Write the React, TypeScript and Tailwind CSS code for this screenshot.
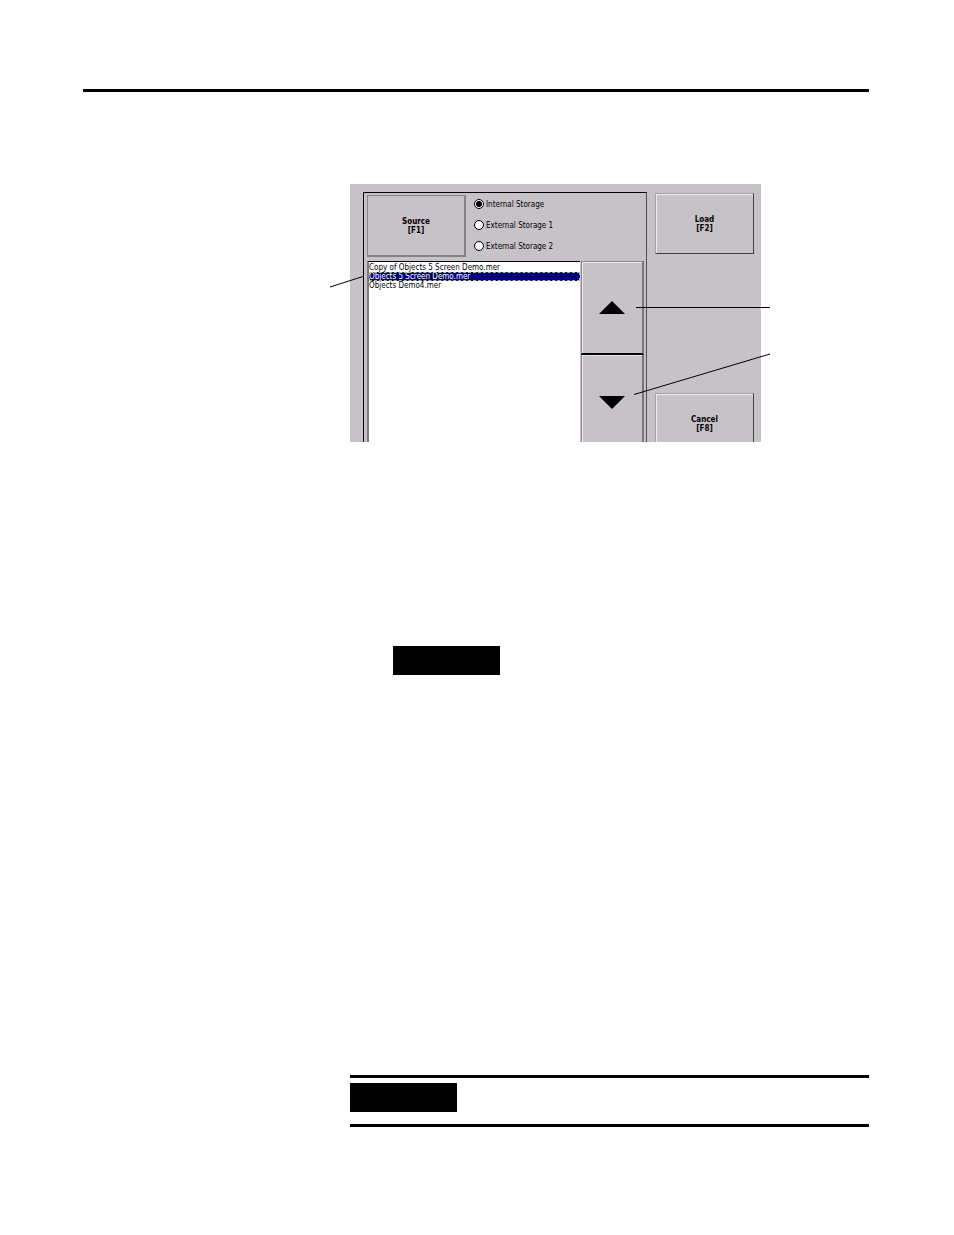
import { useState } from "react";

const files = ["Copy of Objects 5 Screen Demo.mer", "Objects 5 Screen Demo.mer", "Objects Demo4.mer"];
const sources = ["Internal Storage", "External Storage 1", "External Storage 2"];

function KeyButton({ label, fkey, className }: { label: string; fkey: string; className: string }) {
  return (
    <button
      type="button"
      className={`flex shrink-0 flex-col items-center justify-center leading-[9px] font-bold ${className}`}
    >
      <span>{label}</span>
      <span>[{fkey}]</span>
    </button>
  );
}

function Terminal() {
  const [source, setSource] = useState(0);
  const [selected, setSelected] = useState(1);
  const move = (step: number) => setSelected(Math.min(files.length - 1, Math.max(0, selected + step)));

  return (
    <div className="flex h-[258px] items-start overflow-hidden bg-[#c7c2c8] pt-2 pl-[13px] font-['DejaVu_Sans_Condensed','DejaVu_Sans',sans-serif] text-[8px] text-black">
      <section className="w-[284px] shrink-0 border-t border-r border-l border-t-black border-r-[#504d51] border-l-black px-[3px] pt-[2px]">
        <div className="flex">
          <KeyButton
            label="Source"
            fkey="F1"
            className="h-[62px] w-[99px] border border-r-2 border-b-2 border-[#858286]"
          />
          <div role="radiogroup" aria-label="Source" className="flex flex-col gap-[11px] pt-1 pl-2">
            {sources.map((name, i) => (
              <label key={name} className="flex h-[10px] items-center gap-[2px] leading-[12px]">
                <input
                  type="radio"
                  name="source"
                  checked={source === i}
                  onChange={() => setSource(i)}
                  className="size-[10px] appearance-none rounded-full border border-black bg-white bg-clip-padding checked:bg-[radial-gradient(circle,#000_0_2.7px,#fff_3.3px)]"
                />
                <span className="pt-px">{name}</span>
              </label>
            ))}
          </div>
        </div>
        <div className="mt-1 flex h-[190px]">
          <ul
            role="listbox"
            aria-label="Files"
            className="w-[213px] shrink-0 border-t border-l-2 border-t-black border-l-[#7d7a7e] bg-white pt-px"
          >
            {files.map((file, i) => (
              <li key={file} role="option" aria-selected={selected === i} className="flex">
                <button
                  type="button"
                  onClick={() => setSelected(i)}
                  className={
                    selected === i
                      ? "h-[9px] w-full bg-[#00007c] text-left leading-[9px] text-white outline-1 -outline-offset-1 outline-dashed outline-[#b9b98c]"
                      : "h-[9px] w-full text-left leading-[9px]"
                  }
                >
                  {file}
                </button>
              </li>
            ))}
          </ul>
          <div className="ml-px flex w-[63px] shrink-0 flex-col">
            <button
              type="button"
              aria-label="Move up"
              onClick={() => move(-1)}
              className="flex h-[94px] items-center justify-center border-t border-r-2 border-b-2 border-l border-t-[#8d8a8e] border-r-[#767377] border-b-black border-l-[#8d8a8e] shadow-[inset_1px_1px_0_#eeebef]"
            >
              <svg width="26" height="13" viewBox="0 0 26 13" aria-hidden="true">
                <path d="M0 13 13 0l13 13z" />
              </svg>
            </button>
            <button
              type="button"
              aria-label="Move down"
              onClick={() => move(1)}
              className="flex h-[95px] items-center justify-center border-r-2 border-l border-r-[#767377] border-l-[#8d8a8e] shadow-[inset_1px_1px_0_#eeebef]"
            >
              <svg width="26" height="13" viewBox="0 0 26 13" aria-hidden="true">
                <path d="M0 0h26L13 13z" />
              </svg>
            </button>
          </div>
        </div>
      </section>
      <div className="ml-2 flex flex-col gap-[139px] pt-px">
        <KeyButton
          label="Load"
          fkey="F2"
          className="h-[61px] w-[99px] border border-t-[#a5a2a6] border-r-[#454246] border-b-[#454246] border-l-[#a5a2a6] shadow-[inset_1px_1px_0_#eeebef]"
        />
        <KeyButton
          label="Cancel"
          fkey="F8"
          className="h-[61px] w-[99px] border border-t-[#a5a2a6] border-r-[#454246] border-b-[#454246] border-l-[#a5a2a6] shadow-[inset_1px_1px_0_#eeebef]"
        />
      </div>
    </div>
  );
}

export default function App() {
  return (
    <main className="min-h-screen bg-white pt-[89px] pr-[85px] pb-[108px] pl-[83px]">
      <hr className="border-t-[3px] border-black" />
      <div className="pt-[92px] pl-[267px]">
        <figure className="relative w-[411px]">
          <Terminal />
          <svg
            className="pointer-events-none absolute top-0 -left-5"
            width="440"
            height="258"
            viewBox="0 0 440 258"
            fill="none"
            stroke="#000"
            aria-hidden="true"
          >
            <path d="M0 103 33 92.5M306 123.5H440M304 210.5 440 170" />
          </svg>
        </figure>
        <div className="mt-[204px] ml-[43px] h-[29px] w-[107px] bg-black" />
        <div className="mt-[400px] border-y-[3px] border-black pt-[5px] pb-3">
          <div className="h-[29px] w-[107px] bg-black" />
        </div>
      </div>
    </main>
  );
}
